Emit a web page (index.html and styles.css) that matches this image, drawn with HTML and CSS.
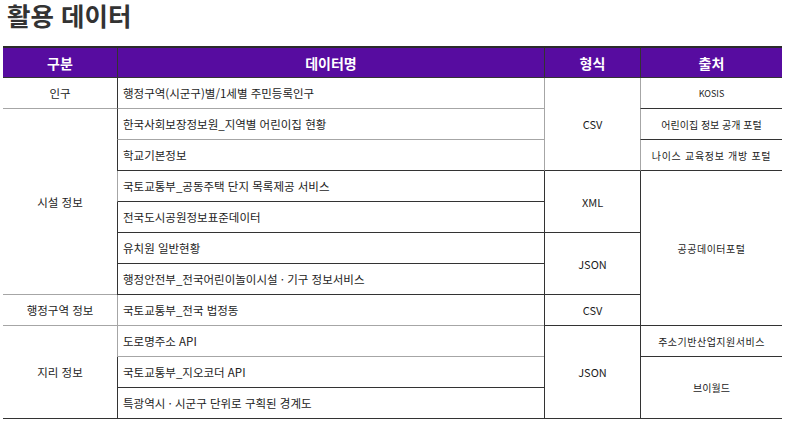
FILE: index.html
```html
<!DOCTYPE html>
<html lang="ko">
<head>
<meta charset="utf-8">
<title>활용 데이터</title>
<link rel="stylesheet" href="styles.css">
</head>
<body>
<h1 class="title">활용 데이터</h1>
<div class="grid">
  <div class="h c1">구분</div>
  <div class="h c2 ld">데이터명</div>
  <div class="h c3 ld">형식</div>
  <div class="h c4 ld">출처</div>

  <div class="cell c1 bg">인구</div>
  <div class="cell c2 ld bg">행정구역(시군구)별/1세별 주민등록인구</div>
  <div class="cell c3 s3 lg bd">CSV</div>
  <div class="cell c4 lg bd kosis">KOSIS</div>

  <div class="cell c1 s6 bg">시설 정보</div>
  <div class="cell c2 ld bg">한국사회보장정보원_지역별 어린이집 현황</div>
  <div class="cell c4 lg bd">어린이집 정보 공개 포털</div>

  <div class="cell c2 ld bd">학교기본정보</div>
  <div class="cell c4 lg bd wide">나이스 교육정보 개방 포털</div>

  <div class="cell c2 lg bd">국토교통부_공동주택 단지 목록제공 서비스</div>
  <div class="cell c3 s2 ld bd">XML</div>
  <div class="cell c4 s5 ld bd spaced">공공데이터포털</div>

  <div class="cell c2 ld bd">전국도시공원정보표준데이터</div>

  <div class="cell c2 ld bd">유치원 일반현황</div>
  <div class="cell c3 s2 ld bd">JSON</div>

  <div class="cell c2 ld bd">행정안전부_전국어린이놀이시설 · 기구 정보서비스</div>

  <div class="cell c1 bg">행정구역 정보</div>
  <div class="cell c2 lg bg">국토교통부_전국 법정동</div>
  <div class="cell c3 ld bd">CSV</div>

  <div class="cell c1 s3 bd">지리 정보</div>
  <div class="cell c2 lg bg">도로명주소 API</div>
  <div class="cell c3 s3 ld bd">JSON</div>
  <div class="cell c4 ld bd spaced">주소기반산업지원서비스</div>

  <div class="cell c2 ld bd">국토교통부_지오코더 API</div>
  <div class="cell c4 s2 ld bd">브이월드</div>

  <div class="cell c2 ld bd">특광역시 · 시군구 단위로 구획된 경계도</div>
</div>
</body>
</html>
```

FILE: styles.css
```css
html, body {
  margin: 0;
  padding: 0;
  background: #ffffff;
}

body {
  font-family: "Noto Sans CJK KR", "Noto Sans", sans-serif;
  color: #1c1c1c;
}

.title {
  margin: 0;
  height: 46px;
  padding: 0 0 0 7px;
  box-sizing: border-box;
  font-size: 25.5px;
  line-height: 29px;
  font-weight: 700;
  color: #333333;
}

.grid {
  display: grid;
  margin-left: 3px;
  width: 779px;
  grid-template-columns: 114px 427px 96px 142px;
  grid-template-rows: 30px;
  grid-auto-rows: 31px;
  border-top: 2px solid #2b2b2b;
}

.h, .cell {
  box-sizing: border-box;
  display: flex;
  align-items: center;
  justify-content: center;
  white-space: nowrap;
}

.cell {
  font-size: 11.5px;
  color: #1c1c1c;
}

.c1 { grid-column: 1; }
.c2 { grid-column: 2; }
.c3 { grid-column: 3; font-size: 11px; }
.c4 { grid-column: 4; font-size: 10px; }

.h {
  background: #570ca0;
  color: #ffffff;
  font-size: 14px;
  font-weight: 700;
  border-bottom: 1px solid #333333;
}

.cell.c2 {
  justify-content: flex-start;
  padding-left: 5px;
}

.s2 { grid-row: span 2; }
.s3 { grid-row: span 3; }
.s5 { grid-row: span 5; }
.s6 { grid-row: span 6; }

.ld { border-left: 1px solid #333333; }
.lg { border-left: 1px solid #a6a6a6; }
.bd { border-bottom: 1px solid #333333; }
.bg { border-bottom: 1px solid #a6a6a6; }

.kosis { font-size: 9px; }
.spaced { letter-spacing: 0.5px; }
.wide { letter-spacing: 0.7px; }
```
